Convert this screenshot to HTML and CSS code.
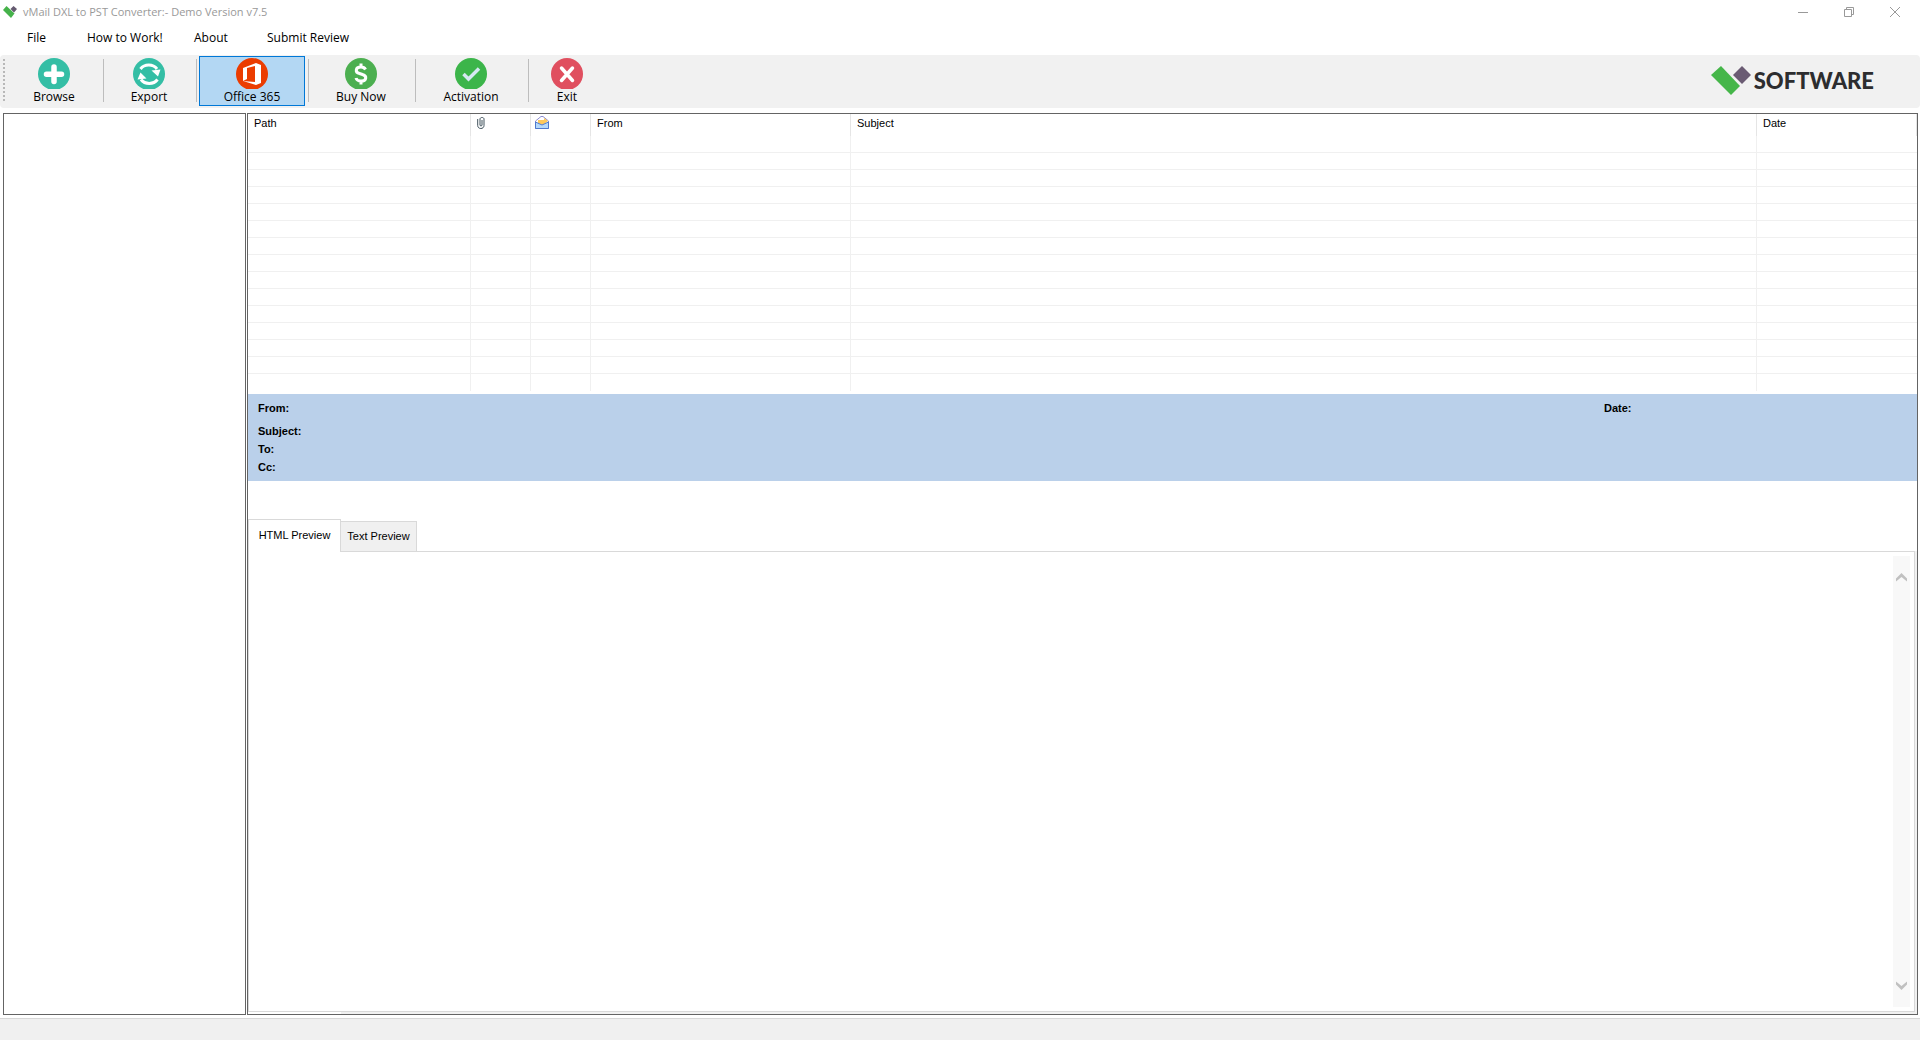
FILE: index.html
```html
<!DOCTYPE html>
<html lang="en">
<head>
<meta charset="utf-8">
<title>vMail DXL to PST Converter</title>
<link rel="stylesheet" href="styles.css">
</head>
<body>
<header class="titlebar">
  <svg class="app-icon" viewBox="0 0 16 12" aria-hidden="true"><path fill="#45b24a" d="M0 4l3.500-4 8 7.500L8 12z"/><path fill="#655a70" d="M7.500 3l3-3L14 3l-3 3.500z"/></svg>
  <span class="window-title">vMail DXL to PST Converter:- Demo Version v7.5</span>
  <div class="window-buttons">
    <button type="button" aria-label="Minimize"><svg viewBox="0 0 10 10"><path d="M0 5.500h10"/></svg></button>
    <button type="button" aria-label="Restore"><svg viewBox="0 0 10 10"><path d="M.5 2.500h7v7h-7zM2.500 2.500v-2h7v7h-2"/></svg></button>
    <button type="button" aria-label="Close"><svg viewBox="0 0 10 10"><path d="M0 0l10 10M10 0L0 10"/></svg></button>
  </div>
</header>
<nav class="menubar">
  <button type="button" class="menu-file">File</button>
  <button type="button" class="menu-how">How to Work!</button>
  <button type="button" class="menu-about">About</button>
  <button type="button">Submit Review</button>
</nav>
<div class="toolbar" role="toolbar" aria-label="Main">
  <span class="grip"></span>
  <button type="button" class="tool browse"><svg viewBox="0 0 32 31"><circle cx="16" cy="16" r="16" fill="#34bea5"/><path d="M16 9v14.500M8.500 16.300h15" stroke="#fff" stroke-width="5.500" stroke-linecap="round"/></svg>Browse</button>
  <span class="separator"></span>
  <button type="button" class="tool export"><svg viewBox="0 0 32 31"><circle cx="16" cy="16" r="16" fill="#34bea5"/><path d="M7.500 11a10 9 0 0 1 16.500 0M24.500 21.500a10 9 0 0 1-16.500 0" fill="none" stroke="#fff" stroke-width="3"/><path d="M18.500 12.500l9-1-2.500 7zM4.500 21.500l3-7 6 6z" fill="#fff"/></svg>Export</button>
  <span class="separator"></span>
  <button type="button" class="tool office active"><svg viewBox="0 0 32 31"><circle cx="16" cy="16" r="16" fill="#eb3c00"/><path fill="#fff" fill-rule="evenodd" d="M7 10l13-5 5 2v18l-5 2-13-4 12 1V8l-8 2v11l-4 2z"/></svg>Office 365</button>
  <span class="separator"></span>
  <button type="button" class="tool buy"><svg viewBox="0 0 32 31"><circle cx="16" cy="16" r="16" fill="#4caf50"/><path d="M20.500 11.500c-1-2-2.500-2.500-4.500-2.500-6 0-6 5.500-1.500 6.500l3 1c5 1.500 4 6.500-1.500 6.500-2.500 0-4.500-1-5-3M16 5.500V9M16 23v3.500" fill="none" stroke="#fff" stroke-width="3"/></svg>Buy Now</button>
  <span class="separator"></span>
  <button type="button" class="tool activation"><svg viewBox="0 0 32 31"><circle cx="16" cy="16" r="16" fill="#3cb54a"/><path d="M8.500 16l5 5L24 10.500" fill="none" stroke="#d5e8f2" stroke-width="3.500"/></svg>Activation</button>
  <span class="separator"></span>
  <button type="button" class="tool exit"><svg viewBox="0 0 32 31"><circle cx="16" cy="16" r="16" fill="#e04f5f"/><path d="M10.500 10l11 12.500M21.500 10l-11 12.500" stroke="#fff" stroke-width="3.500" stroke-linecap="round"/></svg>Exit</button>
  <div class="brand"><svg viewBox="0 0 40 30" aria-hidden="true"><path fill="#45b649" d="M0 9l10-9 19 20-9 9z"/><path fill="#6a5b73" d="M22 9l9-9 9 9-9 9z"/></svg><span>SOFTWARE</span></div>
</div>
<main class="workspace">
  <aside class="tree" aria-label="Folders"></aside>
  <section class="content">
    <table class="mail-list">
      <colgroup><col class="c-path"><col class="c-flag"><col class="c-flag"><col class="c-from"><col><col class="c-date"></colgroup>
      <thead><tr>
        <th>Path</th>
        <th><svg class="clip" viewBox="0 0 8 12" role="img" aria-label="Attachment"><path d="M.7 2v6.500c0 4 6.300 4 6.300 0V2c0-2-4-2-4 0v6c0 1.300 2 1.300 2 0V3" fill="none" stroke="#40525c"/></svg></th>
        <th class="h-mail"><svg class="mail" viewBox="0 0 14 13" role="img" aria-label="Read"><path d="M.5 5l5.500-4.500h2L13.500 5v7.500H.5z" fill="#fff" stroke="#8d8cd0"/><path d="M3 4h6V2l4 3-3 2.500L7 9 3 7z" fill="#ffc95a"/><path d="M.5 6L7 9l6.500-3v6.500H.5z" fill="#b5d9fa" stroke="#4f79cc"/></svg></th>
        <th>From</th><th>Subject</th><th>Date</th>
      </tr></thead>
      <tbody>
        <tr><td></td><td></td><td></td><td></td><td></td><td></td></tr>
        <tr><td></td><td></td><td></td><td></td><td></td><td></td></tr>
        <tr><td></td><td></td><td></td><td></td><td></td><td></td></tr>
        <tr><td></td><td></td><td></td><td></td><td></td><td></td></tr>
        <tr><td></td><td></td><td></td><td></td><td></td><td></td></tr>
        <tr><td></td><td></td><td></td><td></td><td></td><td></td></tr>
        <tr><td></td><td></td><td></td><td></td><td></td><td></td></tr>
        <tr><td></td><td></td><td></td><td></td><td></td><td></td></tr>
        <tr><td></td><td></td><td></td><td></td><td></td><td></td></tr>
        <tr><td></td><td></td><td></td><td></td><td></td><td></td></tr>
        <tr><td></td><td></td><td></td><td></td><td></td><td></td></tr>
        <tr><td></td><td></td><td></td><td></td><td></td><td></td></tr>
        <tr><td></td><td></td><td></td><td></td><td></td><td></td></tr>
        <tr><td></td><td></td><td></td><td></td><td></td><td></td></tr>
        <tr><td></td><td></td><td></td><td></td><td></td><td></td></tr>
      </tbody>
    </table>
    <div class="details">
      <div class="fields"><span class="sender">From:</span><span>Subject:</span><span>To:</span><span>Cc:</span></div>
      <span class="date">Date:</span>
    </div>
    <div class="tabs" role="tablist">
      <button type="button" role="tab" aria-selected="true" class="tab selected">HTML Preview</button>
      <button type="button" role="tab" aria-selected="false" class="tab">Text Preview</button>
    </div>
    <div class="preview">
      <div class="page" role="tabpanel">
        <div class="scrollbar">
          <svg viewBox="0 0 11 9"><path d="M0 8.500v-3L5.500 0 11 5.500v3L5.500 4z"/></svg>
          <svg viewBox="0 0 11 9"><path d="M0 .5v3L5.500 9 11 3.500v-3L5.500 5z"/></svg>
        </div>
      </div>
    </div>
  </section>
</main>
<footer class="statusbar"></footer>
</body>
</html>
```

FILE: styles.css
```css
* { box-sizing: border-box; }
body {
  margin: 0;
  min-height: 100vh;
  display: flex;
  flex-direction: column;
  background: #fff;
  color: #000;
  font: 12px/16px "Open Sans", "Noto Sans", sans-serif;
}
button { font: inherit; color: inherit; background: none; border: 0; padding: 0; }
svg { display: block; }

.titlebar { display: flex; align-items: center; height: 24px; padding-left: 3px; color: #999; }
.window-title { font-size: 11px; }
.app-icon { width: 16px; height: 12px; margin-right: 4px; }
.window-buttons { display: flex; margin: 0 2px 0 auto; height: 20px; }
.window-buttons button { width: 46px; display: grid; place-items: center; }
.window-buttons svg { width: 10px; height: 10px; fill: none; stroke: #999; }

.menubar { display: flex; align-items: center; height: 28px; padding-left: 27px; }
.menubar button { text-align: left; white-space: nowrap; }
.menubar .menu-file { width: 60px; }
.menubar .menu-how { width: 107px; }
.menubar .menu-about { width: 73px; }

.toolbar { display: flex; align-items: center; height: 53px; margin-top: 3px; padding: 0 0 2px 3px; background: #f1f1f1; border-radius: 4px; }
.grip { width: 2px; height: 44px; background: repeating-linear-gradient(#b8b8b8 0 2px, transparent 2px 4px); }
.tool { display: flex; flex-direction: column; align-items: center; height: 50px; border: 1px solid transparent; padding-top: 1px; white-space: nowrap; }
.tool svg { width: 32px; height: 31px; }
.tool.active { background: #b3d7f3; border-color: #0078d7; }
.browse { width: 98px; }
.export { width: 90px; margin-right: 2px; }
.office { width: 106px; margin: 0 3px 0 2px; }
.buy { width: 104px; margin-right: 2px; }
.activation { width: 110px; margin-right: 2px; }
.exit { width: 76px; }
.separator { width: 1px; height: 43px; background: #bdbdbd; }
.brand { display: flex; align-items: center; gap: 3px; margin: 0 46px 0 auto; color: #2d2d2f; font: 900 22px/30px "Lato", sans-serif; }
.brand svg { width: 40px; height: 30px; }

.workspace { flex: 1; display: flex; gap: 1px; margin-top: 5px; padding: 0 2px 0 3px; }
.tree { width: 243px; border: 1px solid #646464; }
.content { flex: 1; display: flex; flex-direction: column; border: 1px solid #646464; font: 11px/14px "Liberation Sans", Arial, sans-serif; }

.mail-list { width: 100%; table-layout: fixed; border-collapse: separate; border-spacing: 0; }
.mail-list th { height: 22px; padding: 0 6px; text-align: left; vertical-align: top; line-height: 18px; font-weight: 400; border-right: 1px solid #e5e5e5; }
.mail-list .h-mail { padding-left: 4px; }
.mail-list td { height: 17px; padding: 0; border-right: 1px solid #f0f0f0; border-bottom: 1px solid #f0f0f0; }
.mail-list td:last-child { border-right: 0; }
.mail-list tbody tr:last-child td { border-bottom: 0; }
.c-path { width: 223px; }
.c-flag { width: 60px; }
.c-from { width: 260px; }
.c-date { width: 160px; }
.clip { width: 8px; height: 12px; margin-top: 3px; }
.mail { width: 14px; height: 13px; margin-top: 2px; }

.details { display: flex; height: 87px; margin-top: 3px; padding: 5px 10px; background: #bad0ea; font-weight: 700; line-height: 18px; }
.fields { display: flex; flex-direction: column; }
.sender { margin-bottom: 5px; }
.date { margin-left: auto; width: 303px; }

.tabs { display: flex; align-items: flex-end; height: 32px; margin-top: 38px; }
.tab { width: 76px; height: 30px; padding-bottom: 1px; border: 1px solid #d9d9d9; border-left: 0; border-bottom: 0; background: #f0f0f0; }
.tab.selected { height: 32px; width: 93px; padding-bottom: 3px; border-left: 1px solid #d9d9d9; background: #fff; }
.preview { flex: 1; display: flex; padding: 0 2px 2px 0; background: linear-gradient(to right, #fff 93px, #f1f1f1 93px); }
.page { flex: 1; display: flex; justify-content: flex-end; padding: 4px 4px 4px 0; border: 1px solid #d9d9d9; background: #fff; }
.scrollbar { width: 17px; display: flex; flex-direction: column; justify-content: space-between; align-items: center; padding: 17px 0; background: #f8f8f8; }
.scrollbar svg { width: 11px; height: 9px; fill: #c0c0c0; }

/* The selected tab covers the top border of its page. */
.tabs { position: relative; z-index: 1; }
.tab.selected { height: 33px; margin-bottom: -1px; }

.statusbar { height: 22px; margin-top: 3px; border-top: 1px solid #d7d7d7; background: #f0f0f0; }
```
